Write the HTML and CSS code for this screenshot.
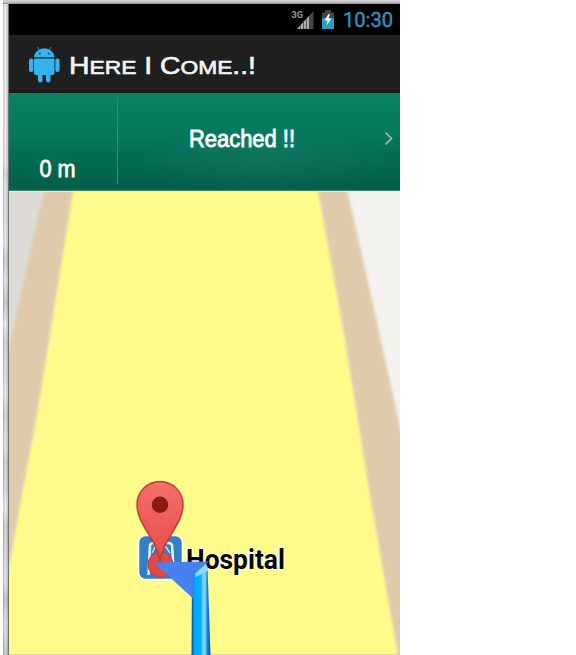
FILE: index.html
```
<!DOCTYPE html>
<html lang="en">
<head>
<meta charset="utf-8">
<title>Here I Come..!</title>
<link rel="stylesheet" href="styles.css">
</head>
<body>
<div class="frame">
  <div class="edge"></div>
  <main class="phone">
    <header class="status">
      <svg width="391" height="31" viewBox="9 4 391 31">
        <text class="network" x="291.500" y="18" textLength="11.500" lengthAdjust="spacingAndGlyphs">3G</text>
        <path d="M297 29L313.500 11V29Z" fill="#444"/>
        <path d="M297 29L309 16V29Z" fill="#aaa"/>
        <path d="M300.500 24V29M303.500 21V29M306.500 18V29M309.500 15V29" stroke="#444" stroke-width=".8"/>
        <path d="M322 12.500H325V10H331V12.500H334V18H322Z" fill="#454545"/>
        <path d="M322 18H334V29H322Z" fill="#2c9cc5"/>
        <path d="M328.500 14L324.500 20.500H327.500L326.500 25.500L331.500 18.500H328.500L330 14.500Z" fill="#fff"/>
        <text class="clock" x="343" y="27.300" textLength="50" lengthAdjust="spacingAndGlyphs">10:30</text>
      </svg>
    </header>
    <header class="titlebar">
      <svg width="391" height="58" viewBox="9 35 391 58">
        <g fill="#35b3ec">
          <path d="M34 57.300A10.200 9 0 0 1 54.500 57.300Z"/>
          <path d="M34 58.500H54.500V73Q54.500 75 52.500 75H50.500V80.200Q50.500 82.500 48.300 82.500T46 80.200V75H42.500V80.200Q42.500 82.500 40.300 82.500T38 80.200V75H36Q34 75 34 73Z"/>
          <rect x="29" y="58.500" width="4.300" height="13.500" rx="2"/>
          <rect x="55.300" y="58.500" width="4.300" height="13.500" rx="2"/>
        </g>
        <path d="M39.500 50L37.500 47M49 50L51 47" stroke="#258bb9" stroke-width="1"/>
        <circle cx="39.800" cy="53.500" r="1" fill="#17506b"/>
        <circle cx="48.800" cy="53.500" r="1" fill="#17506b"/>
        <text class="title" x="69" y="74" textLength="187" lengthAdjust="spacingAndGlyphs">H<tspan class="small">ERE</tspan> I C<tspan class="small">OME</tspan>..!</text>
      </svg>
    </header>
    <section class="direction">
      <svg width="391" height="98" viewBox="9 93 391 98">
        <path d="M117.500 97V184" stroke="#3b8770" stroke-width="1"/>
        <text class="label" x="39.500" y="177.300" textLength="36" lengthAdjust="spacingAndGlyphs">0 m</text>
        <text class="label" x="189" y="146.700" textLength="106" lengthAdjust="spacingAndGlyphs">Reached !!</text>
        <path d="M385.500 132.500L391.500 138.500L385.500 144.500" fill="none" stroke="#a9bdb3" stroke-width="1.600"/>
      </svg>
    </section>
    <section class="map">
      <svg width="391" height="464" viewBox="9 191 391 464">
        <defs>
          <filter id="soft" x="-10%" y="-10%" width="120%" height="120%"><feGaussianBlur stdDeviation="1.500"/></filter>
          <linearGradient id="pin" x2="0" y2="1"><stop stop-color="#f56f6c"/><stop offset="1" stop-color="#e64b45"/></linearGradient>
          <linearGradient id="route">
            <stop stop-color="#0756b5"/><stop offset=".1" stop-color="#0877d5"/><stop offset=".14" stop-color="#00a9ff"/>
            <stop offset=".5" stop-color="#00b0ff"/><stop offset=".58" stop-color="#67cbff"/><stop offset=".72" stop-color="#84d4fc"/>
            <stop offset=".82" stop-color="#1689dd"/><stop offset="1" stop-color="#064fae"/>
          </linearGradient>
        </defs>
        <path d="M0 180H210V660H0Z" fill="#dedbd7"/>
        <path d="M210 180H410V660H210Z" fill="#f3f2ef"/>
        <g filter="url(#soft)">
          <path d="M46 180L9 348L-8 430V680H420V515L400 427L372 300L345 180Z" fill="#dfcbab"/>
          <path d="M75 180L54 310L37 415L21 500L7 580L-12 680H402L369 490L345 340L316 180Z" fill="#fffb8a"/>
        </g>
        <path d="M9 191.500H400" stroke="#fff" stroke-opacity=".65"/>
        <path d="M9 654.500H400" stroke="#d2cf87" stroke-opacity=".7"/>
        <rect x="138.500" y="535.500" width="44" height="44" rx="7" fill="#327fc4" stroke="#fff" stroke-width="1.600"/>
        <path d="M148.500 575L150 545Q151 543 154 543H168Q171 543 172 545L174 575" fill="none" stroke="#e8f4fc" stroke-width="2.500"/>
        <path d="M152 553L155 547H166L170 553" fill="none" stroke="#bfdff4" stroke-width="1.500"/>
        <text class="place" x="186" y="569" textLength="99" lengthAdjust="spacingAndGlyphs">Hospital</text>
        <circle cx="160.500" cy="564.500" r="12.500" fill="#e34943" stroke="#b93d43"/>
        <path d="M160 562C158 540 137 525 137 504.500A23 23 0 0 1 183 504.500C183 525 162 540 160 562Z" fill="url(#pin)" stroke="#b8403a" stroke-width="1.500"/>
        <circle cx="160" cy="504.800" r="8.200" fill="#861d0d"/>
        <path d="M192 572L207.500 566.500L210.500 655H191.500Z" fill="url(#route)"/>
        <path d="M194 570L206 565L208.500 570L207.500 571L196 577Z" fill="#8bdaff"/>
        <path d="M154 562.500L208.500 561.500L193.500 575V599Z" fill="#4681ef"/>
      </svg>
    </section>
  </main>
</div>
</body>
</html>
```
FILE: styles.css
```
body {
  margin: 0;
  background: #fff;
  overflow: hidden;
}

.frame {
  display: flex;
  box-sizing: border-box;
  width: 397px;
  height: 655px;
  margin-left: 3px;
  padding-top: 4px;
  background: linear-gradient(#d9d7d6, #b8b5b3 3px, #777 4px, #fff 4px);
}

.edge {
  box-sizing: border-box;
  width: 6px;
  border-right: 1px solid #717477;
  background:
    linear-gradient(90deg, #aaa6 0, #fff8 50%, #aaa8),
    linear-gradient(#d6d4d0 0 160px, #aeb4bd 170px, #c8c8c8 182px, #bdc9d6 215px, #d5d5d5 240px, #a1a1a1 255px, #d0d0d0 275px, #999 300px, #d5dbe4 320px, #aaa 338px, #bbc6d3 370px, #d5d5d5 390px, #acacac 410px, #ccc 440px, #a6a6a6 459px, #b3c0d1 485px, #ddd 505px, #a4a4a4 521px, #b7c3d3 560px, #ccc 577px, #999 594px, #c5c5c5 620px, #999 651px);
}

.phone {
  display: flex;
  flex-direction: column;
  width: 391px;
}

svg {
  display: block;
}

.status {
  height: 31px;
  background: #000;
}

.titlebar {
  height: 58px;
  background: linear-gradient(#252525, #1f1f1f 4px, #1f1f1f 55px, #171717);
}

.direction {
  height: 98px;
  background:
    radial-gradient(ellipse at 65% 68%, #ffffff0d, transparent 35%),
    linear-gradient(#078464, #04775c 45%, #035e49 98%, #43866f);
}

.map {
  height: 464px;
  overflow: hidden;
}

.network {
  font: bold 9.5px "Roboto", sans-serif;
  fill: #999;
}

.clock {
  font: 20px "Roboto", sans-serif;
  fill: #2c96c1;
  stroke: #2c96c1;
  stroke-width: .4px;
}

.title {
  font: 23px "Liberation Sans", sans-serif;
  fill: #f5f5f5;
  stroke: #f5f5f5;
  stroke-width: .6px;
}

.small {
  font-size: 18.5px;
}

.label {
  font: 23px "Liberation Sans", sans-serif;
  fill: #fff;
  stroke: #fff;
  stroke-width: .8px;
}

.place {
  font: bold 28px "Roboto", sans-serif;
  fill: #080808;
  stroke: #fff;
  stroke-width: 2px;
  stroke-linejoin: round;
  paint-order: stroke;
}
```
